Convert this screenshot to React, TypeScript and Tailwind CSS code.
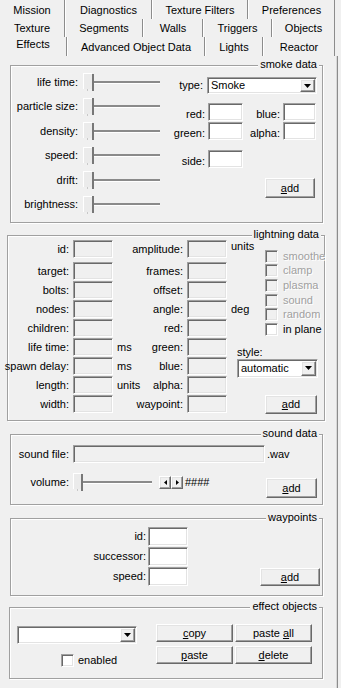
import React from "react";

const sunkenBase =
  "box-border shrink-0 border border-t-[#a0a0a0] border-l-[#a0a0a0] border-r-white border-b-white shadow-[inset_1px_1px_0_#696969,inset_-1px_-1px_0_#e3e3e3]";
const raisedBase =
  "box-border shrink-0 border border-t-white border-l-white border-r-[#696969] border-b-[#696969] shadow-[inset_-1px_-1px_0_#a0a0a0,inset_1px_1px_0_#e3e3e3] bg-[#f0f0f0]";

function Box({ cls, white = false }: { cls: string; white?: boolean }) {
  return <div className={`${sunkenBase} ${white ? "bg-white" : "bg-[#f0f0f0]"} ${cls}`} />;
}

function Btn({ cls, children }: { cls: string; children: React.ReactNode }) {
  return (
    <div className={`${raisedBase} flex items-center justify-center whitespace-nowrap ${cls}`}>
      {children}
    </div>
  );
}

function DownTri() {
  return (
    <svg width="7" height="4" viewBox="0 0 7 4">
      <path d="M0 0H7L3.5 4Z" fill="#000" />
    </svg>
  );
}

function Combo({ cls, text }: { cls: string; text?: string }) {
  return (
    <div className={`${sunkenBase} bg-white p-[1px] flex ${cls}`}>
      <div className="flex-1 flex items-center pl-[2px] whitespace-nowrap overflow-hidden">{text}</div>
      <div className={`${raisedBase} w-[15px] h-full flex items-center justify-center`}>
        <DownTri />
      </div>
    </div>
  );
}

function Check({ on = true }: { on?: boolean }) {
  return <div className={`${sunkenBase} w-[13px] h-[13px] ${on ? "bg-white" : "bg-[#f0f0f0]"}`} />;
}

function Slider({ thumb, ch }: { thumb: string; ch: string }) {
  return (
    <div className="flex items-center shrink-0">
      <div className="flex flex-col items-center">
        <div className={`${thumb} h-[16px] bg-[#ebebeb] border-l border-t border-l-white border-t-white`} />
        <div className="w-[1px] h-[2px] bg-[#c8c8c8]" />
      </div>
      <div className="w-[2px] h-[17px] bg-[#777777]" />
      <div className={`${ch} h-[3px] border-t-2 border-t-[#8a8a8a] border-b border-b-white`} />
    </div>
  );
}

function Group({ title, cls, children }: { title: string; cls: string; children?: React.ReactNode }) {
  return (
    <div className={`relative box-border shrink-0 border border-[#a0a0a0] shadow-[inset_1px_1px_0_#fff,1px_1px_0_#fff] ${cls}`}>
      <span className="absolute top-[-8px] right-[3px] px-[2px] bg-[#f0f0f0] leading-[13px] whitespace-nowrap">
        {title}
      </span>
      {children}
    </div>
  );
}

const U = ({ c }: { c: string }) => <span className="underline underline-offset-[1px]">{c}</span>;

const tabRows: [string, string][][] = [
  [
    ["Mission", "w-[65px]"],
    ["Diagnostics", "w-[87px]"],
    ["Texture Filters", "w-[96px]"],
    ["Preferences", "w-[87px]"],
  ],
  [
    ["Texture", "w-[65px]"],
    ["Segments", "w-[78px]"],
    ["Walls", "w-[60px]"],
    ["Triggers", "w-[69px]"],
    ["Objects", "w-[63px]"],
  ],
  [
    ["Effects", "w-[67px]"],
    ["Advanced Object Data", "w-[138px]"],
    ["Lights", "w-[58px]"],
    ["Reactor", "w-[72px]"],
  ],
];

const rowH = ["h-[19px]", "h-[18px]", "h-[19px]"];

function Tabs() {
  return (
    <div className="flex flex-col">
      {tabRows.map((row, ri) => (
        <div key={ri} className={`flex ${rowH[ri]}`}>
          {row.map(([t, w], ti) => {
            const sel = ri === 2 && ti === 0;
            return (
              <div
                key={t}
                className={`${w} h-full shrink-0 flex items-center justify-center whitespace-nowrap border-r border-r-[#8c8c8c] ${
                  ti === 0 ? "" : "border-l border-l-white"
                } ${sel ? "pb-[5px]" : "pt-[1px]"}`}
              >
                {t}
              </div>
            );
          })}
        </div>
      ))}
    </div>
  );
}

const lightRows: [string, string, string, string][] = [
  ["id:", "amplitude:", "", "units"],
  ["target:", "frames:", "", ""],
  ["bolts:", "offset:", "", ""],
  ["nodes:", "angle:", "", "deg"],
  ["children:", "red:", "", ""],
  ["life time:", "green:", "ms", ""],
  ["spawn delay:", "blue:", "ms", ""],
  ["length:", "alpha:", "units", ""],
  ["width:", "waypoint:", "", ""],
];

const checks: [string, boolean][] = [
  ["smoothe", false],
  ["clamp", false],
  ["plasma", false],
  ["sound", false],
  ["random", false],
  ["in plane", true],
];

export default function App() {
  return (
    <div className="w-[341px] h-[688px] bg-[#f0f0f0] overflow-hidden text-[11px] leading-[13px] text-black font-['Liberation_Sans',Arial,sans-serif]">
      <Tabs />
      <div className="w-[338px] h-[632px] border-r border-r-[#8c8c8c] shadow-[inset_-1px_0_0_#d8d8d8] flex flex-col">
        {/* smoke data */}
        <Group title="smoke data" cls="ml-[10px] mt-[9px] w-[313px] h-[158px] flex">
          <div className="w-[161px] shrink-0 pt-[4px] flex flex-col">
            {["life time:", "particle size:", "density:", "speed:", "drift:", "brightness:"].map((l) => (
              <div key={l} className="h-[24.5px] flex items-center">
                <div className="w-[67px] shrink-0 flex justify-end whitespace-nowrap">{l}</div>
                <div className="ml-[5px]">
                  <Slider thumb="w-[9px]" ch="w-[66px]" />
                </div>
              </div>
            ))}
          </div>
          <div className="flex flex-col pt-[11px]">
            <div className="flex items-center h-[17px]">
              <div className="w-[31px] shrink-0 text-right">type:</div>
              <Combo cls="ml-[4px] w-[110px] h-[17px]" text="Smoke" />
            </div>
            <div className="mt-[9px] flex items-end h-[18px]">
              <div className="w-[33px] shrink-0 text-right">red:</div>
              <Box cls="ml-[3px] w-[35px] h-[18px]" white />
              <div className="w-[37px] shrink-0 text-right">blue:</div>
              <Box cls="ml-[3px] w-[33px] h-[18px]" white />
            </div>
            <div className="mt-[1px] flex items-end h-[18px]">
              <div className="w-[33px] shrink-0 text-right">green:</div>
              <Box cls="ml-[3px] w-[35px] h-[18px]" white />
              <div className="w-[37px] shrink-0 text-right">alpha:</div>
              <Box cls="ml-[3px] w-[33px] h-[18px]" white />
            </div>
            <div className="mt-[10px] flex items-end h-[18px]">
              <div className="w-[33px] shrink-0 text-right">side:</div>
              <Box cls="ml-[3px] w-[35px] h-[18px]" white />
            </div>
            <Btn cls="mt-[10px] ml-[93px] w-[50px] h-[20px]">
              <U c="a" />
              dd
            </Btn>
          </div>
        </Group>

        {/* lightning data */}
        <Group title="lightning data" cls="ml-[7px] mt-[12px] w-[318px] h-[186px] flex">
          <div className="w-[229px] shrink-0 pt-[4px] flex flex-col">
            {lightRows.map(([a, b, u1, u2], i) => (
              <div key={a} className={`flex items-center h-[18px] ${i === 1 ? "mt-[4px]" : i > 1 ? "mt-[1px]" : ""}`}>
                <div className="w-[61px] shrink-0 flex justify-end whitespace-nowrap">{a}</div>
                <Box cls="ml-[4px] w-[40px] h-[18px]" />
                <div className="ml-[4px] w-[17px] shrink-0 whitespace-nowrap">{u1}</div>
                <div className="w-[49px] shrink-0 flex justify-end whitespace-nowrap">{b}</div>
                <Box cls="ml-[4px] w-[40px] h-[18px]" />
                <div className={`ml-[4px] shrink-0 whitespace-nowrap ${i === 0 ? "-mt-[6px]" : ""}`}>{u2}</div>
              </div>
            ))}
          </div>
          <div className="flex flex-col pt-[13px]">
            {checks.map(([l, on]) => (
              <div key={l} className="h-[14.6px] flex items-center pl-[28px]">
                <Check on={on} />
                <span className={`ml-[5px] whitespace-nowrap ${on ? "" : "text-[#a0a0a0] [text-shadow:1px_1px_0_#fff]"}`}>{l}</span>
              </div>
            ))}
            <div className="mt-[9px] leading-[13px]">style:</div>
            <Combo cls="w-[81px] h-[19px]" text="automatic" />
            <Btn cls="mt-[17px] ml-[28px] w-[52px] h-[19px]">
              <U c="a" />
              dd
            </Btn>
          </div>
        </Group>

        {/* sound data */}
        <Group title="sound data" cls="ml-[10px] mt-[13px] w-[313px] h-[71px] flex flex-col pt-[10px]">
          <div className="flex items-center h-[18px]">
            <div className="w-[58px] shrink-0 text-right whitespace-nowrap">sound file:</div>
            <Box cls="ml-[4px] w-[192px] h-[18px]" />
            <div className="ml-[2px]">.wav</div>
          </div>
          <div className="mt-[9px] flex items-center h-[20px]">
            <div className="w-[58px] shrink-0 text-right">volume:</div>
            <div className="ml-[4px]">
              <Slider thumb="w-[8px]" ch="w-[69px]" />
            </div>
            <div className="ml-[7px] flex">
              <Btn cls="w-[12px] h-[13px]">
                <svg width="3" height="5" viewBox="0 0 3 5">
                  <path d="M3 0V5L0 2.5Z" fill="#000" />
                </svg>
              </Btn>
              <Btn cls="w-[12px] h-[13px]">
                <svg width="3" height="5" viewBox="0 0 3 5">
                  <path d="M0 0V5L3 2.5Z" fill="#000" />
                </svg>
              </Btn>
            </div>
            <div className="ml-[2px]">####</div>
            <Btn cls="ml-auto mr-[5px] self-start mt-[6px] w-[51px] h-[20px]">
              <U c="a" />
              dd
            </Btn>
          </div>
        </Group>

        {/* waypoints */}
        <Group title="waypoints" cls="ml-[10px] mt-[13px] w-[313px] h-[78px] flex flex-col pt-[8px]">
          {["id:", "successor:", "speed:"].map((l, i) => (
            <div key={l} className={`flex items-center h-[19px] ${i > 0 ? "mt-[1px]" : ""}`}>
              <div className="w-[135px] shrink-0 text-right">{l}</div>
              <Box cls="ml-[2px] w-[40px] h-[19px]" white />
              {i === 2 && (
                <Btn cls="ml-[72px] w-[60px] h-[18px] self-start mt-[1px]">
                  <U c="a" />
                  dd
                </Btn>
              )}
            </div>
          ))}
        </Group>

        {/* effect objects */}
        <Group title="effect objects" cls="ml-[9px] mt-[11px] w-[314px] h-[72px] flex pt-[16px]">
          <div className="ml-[7px] flex flex-col">
            <Combo cls="mt-[2px] w-[120px] h-[18px]" />
            <div className="mt-[10px] ml-[44px] flex items-center">
              <Check />
              <span className="ml-[4px]">enabled</span>
            </div>
          </div>
          <div className="ml-[19px] grid grid-cols-[77px_77px] gap-x-[2px] gap-y-[4px] content-start">
            <Btn cls="w-[77px] h-[18px]">
              <U c="c" />
              opy
            </Btn>
            <Btn cls="w-[77px] h-[18px]">
              paste&nbsp;<U c="a" />
              ll
            </Btn>
            <Btn cls="w-[77px] h-[18px]">
              <U c="p" />
              aste
            </Btn>
            <Btn cls="w-[77px] h-[18px]">
              <U c="d" />
              elete
            </Btn>
          </div>
        </Group>
      </div>
    </div>
  );
}
